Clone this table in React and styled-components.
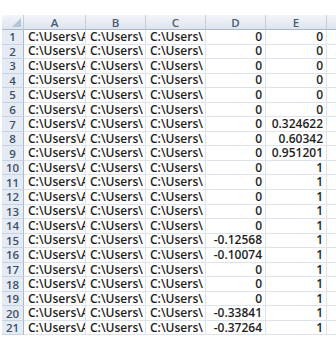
import React from "react";
import styled, { createGlobalStyle } from "styled-components";

const Global = createGlobalStyle`
  html, body { margin: 0; padding: 0; background: #fff; }
  body { font-family: "Open Sans", "Noto Sans", sans-serif; }
`;

const Sheet = styled.div`
  width: 336px;
  height: 337px;
  overflow: hidden;
  padding: 15px 0 0 2px;
  box-sizing: border-box;
`;

const Grid = styled.div`
  display: grid;
  grid-template-columns: 22px 62px 60px 60px 60px 61px 30px;
  grid-auto-rows: 14.55px;
  grid-template-rows: 15px;
  width: 355px;
`;

const ColHead = styled.div`
  background: linear-gradient(#f3f6fa, #dde4ee);
  border-right: 1px solid #c5cfdc;
  border-bottom: 1px solid #a9b8cb;
  color: #4a5a70;
  font-size: 11.5px;
  font-weight: 600;
  display: flex;
  align-items: center;
  justify-content: center;
  box-sizing: border-box;
`;

const Corner = styled(ColHead)`
  position: relative;
  &::after {
    content: "";
    position: absolute;
    right: 2px;
    bottom: 2px;
    width: 0;
    height: 0;
    border-left: 9px solid transparent;
    border-bottom: 9px solid #b7c4d6;
  }
`;

const RowHead = styled.div`
  background: #e4ebf5;
  border-right: 1px solid #a9b8cb;
  border-bottom: 1px solid #c9d4e2;
  color: #3f5068;
  font-size: 11.5px;
  font-weight: 600;
  display: flex;
  align-items: center;
  justify-content: center;
  box-sizing: border-box;
`;

const Cell = styled.div`
  border-right: 1px solid #dfe4ec;
  border-bottom: 1px solid #dfe4ec;
  color: #1e1e1e;
  font-size: 12px;
  font-weight: 600;
  display: flex;
  align-items: center;
  justify-content: ${(p) => (p.$num ? "flex-end" : "flex-start")};
  padding: 0 3px 0 4px;
  box-sizing: border-box;
  overflow: hidden;
  white-space: nowrap;
  line-height: 1;
`;

const cols = ["A", "B", "C", "D", "E", ""];
const dVals = ["0","0","0","0","0","0","0","0","0","0","0","0","0","0","-0.12568","-0.10074","0","0","0","-0.33841","-0.37264"];
const eVals = ["0","0","0","0","0","0","0.324622","0.60342","0.951201","1","1","1","1","1","1","1","1","1","1","1","1"];

export default function App() {
  return (
    <>
      <Global />
      <Sheet>
        <Grid>
          <Corner />
          {cols.map((c, i) => (
            <ColHead key={i}>{c}</ColHead>
          ))}
          {dVals.map((d, r) => (
            <React.Fragment key={r}>
              <RowHead>{r + 1}</RowHead>
              <Cell>C:\Users\A</Cell>
              <Cell>C:\Users\</Cell>
              <Cell>C:\Users\</Cell>
              <Cell $num>{d}</Cell>
              <Cell $num>{eVals[r]}</Cell>
              <Cell />
            </React.Fragment>
          ))}
        </Grid>
      </Sheet>
    </>
  );
}
